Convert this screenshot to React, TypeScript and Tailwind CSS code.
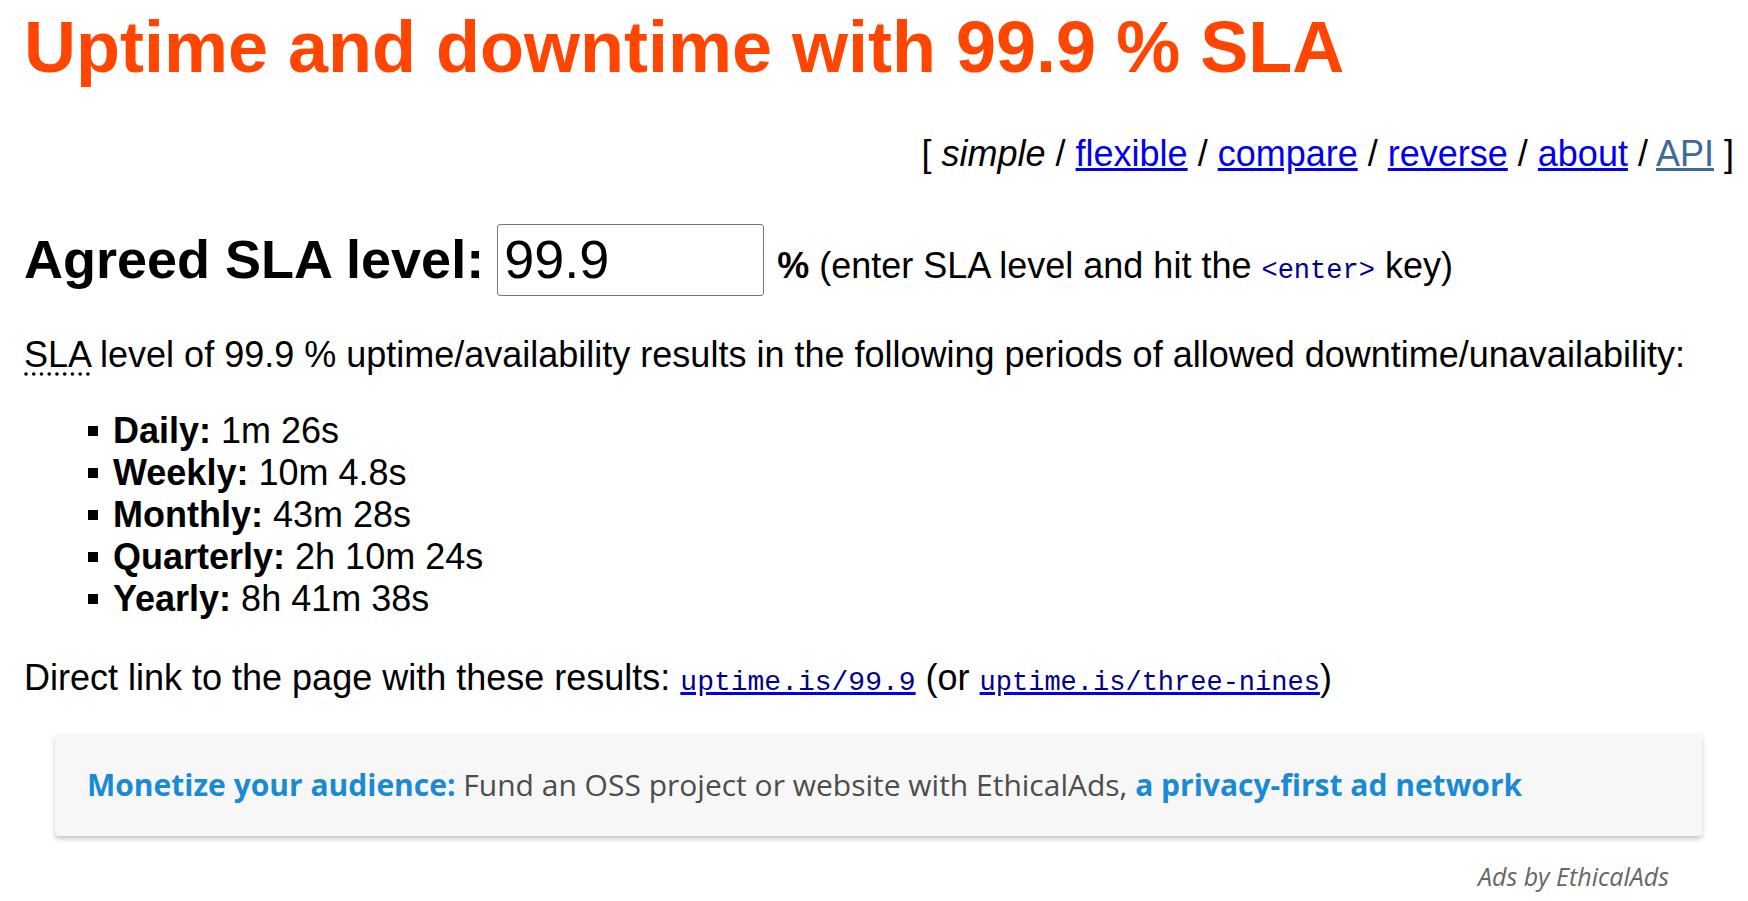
import React from 'react';

const durations = [
  { label: 'Daily:', value: '1m 26s' },
  { label: 'Weekly:', value: '10m 4.8s' },
  { label: 'Monthly:', value: '43m 28s' },
  { label: 'Quarterly:', value: '2h 10m 24s' },
  { label: 'Yearly:', value: '8h 41m 38s' },
];

const sans = "font-['Liberation_Sans',Arial,sans-serif]";
const mono = "font-['Liberation_Mono','DejaVu_Sans_Mono',monospace]";

export default function App() {
  return (
    <div className={`${sans} min-h-[901px] bg-white pl-[24px] pr-[14px] text-black`}>
      {/* Page title */}
      <h1 className="pt-[6px] text-[72px] leading-[82px] font-bold text-[#ff4500]">
        Uptime and downtime with 99.9 % SLA
      </h1>

      {/* Calculator modes */}
      <nav className="mt-[45px] text-right text-[36px] leading-[42px]">
        [ <em>simple</em> / <a href="#" className="text-[#0000ee] underline">flexible</a> /{' '}
        <a href="#" className="text-[#0000ee] underline">compare</a> /{' '}
        <a href="#" className="text-[#0000ee] underline">reverse</a> /{' '}
        <a href="#" className="text-[#0000ee] underline">about</a> /{' '}
        <a href="#" className="text-[#3d6a99] underline">API</a> ]
      </nav>

      {/* SLA input */}
      <div className="mt-[48px] flex items-baseline">
        <label className="text-[54px] leading-[72px] font-bold">Agreed SLA level:</label>
        <input
          type="text"
          defaultValue="99.9"
          className={`${sans} ml-[13px] h-[72px] w-[267px] rounded-[3px] border border-[#767676] px-[6px] text-[54px] text-black outline-none`}
        />
        <span className="ml-[13px] text-[36px] leading-[42px]">
          <b>%</b> (enter SLA level and hit the{' '}
          <kbd className={`${mono} text-[27px] text-[#00008b]`}>&lt;enter&gt;</kbd> key)
        </span>
      </div>

      <p className="mt-[38px] text-[36px] leading-[42px]">
        <abbr title="Service Level Agreement" className="underline decoration-dotted underline-offset-[6px]">
          SLA
        </abbr>{' '}
        level of 99.9 % uptime/availability results in the following periods of allowed downtime/unavailability:
      </p>

      <ul className="mt-[34px] pl-[64px] text-[36px] leading-[42px]">
        {durations.map((d) => (
          <li key={d.label} className="flex items-center">
            <span className="mr-[15px] inline-block h-[10px] w-[10px] bg-black" />
            <span>
              <b>{d.label}</b> {d.value}
            </span>
          </li>
        ))}
      </ul>

      <p className="mt-[37px] text-[36px] leading-[42px]">
        Direct link to the page with these results:{' '}
        <a href="#" className="text-[#0000ee] underline">
          <code className={`${mono} text-[28px] text-[#00008b]`}>uptime.is/99.9</code>
        </a>{' '}
        (or{' '}
        <a href="#" className="text-[#0000ee] underline">
          <code className={`${mono} text-[27px] text-[#00008b]`}>uptime.is/three-nines</code>
        </a>
        )
      </p>

      {/* EthicalAds placement */}
      <div className="mt-[30px] ml-[31px] mr-[32px] font-['Open_Sans',sans-serif]">
        <div className="flex h-[102px] items-center rounded-[4px] bg-[#f7f7f7] pl-[32px] shadow-[0_3px_5px_rgba(0,0,0,0.22)]">
          <p className="text-[30px] text-[#4d4d4d]">
            <a href="#" className="font-bold text-[#1b8ad5]">Monetize your audience:</a> Fund an OSS project or
            website with EthicalAds, <a href="#" className="font-bold text-[#1b8ad5]">a privacy-first ad network</a>
          </p>
        </div>
        <div className="mt-[22px] pr-[33px] text-right text-[25px] italic text-[#666666]">Ads by EthicalAds</div>
      </div>
    </div>
  );
}
